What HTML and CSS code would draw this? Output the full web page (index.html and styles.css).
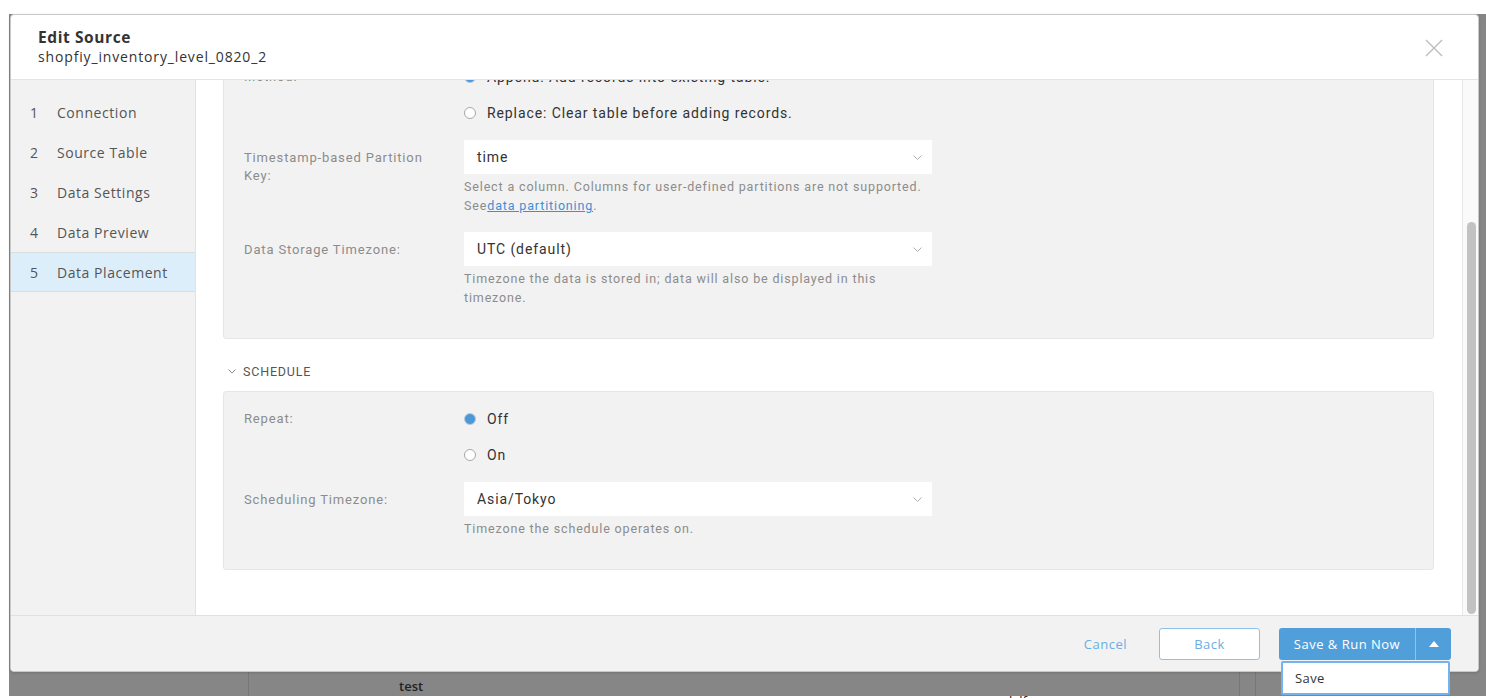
FILE: index.html
```html
<!DOCTYPE html>
<html>
<head>
<meta charset="utf-8">
<link rel="stylesheet" href="styles.css">
</head>
<body>
<div class="screen">
  <div class="backdrop">
    <div class="bg-row">
      <div class="bg-cell bg-first"></div>
      <div class="bg-cell bg-main">
        <span class="bg-text">test</span>
        <span class="bg-text bg-low">lxlf</span>
      </div>
      <div class="bg-cell bg-narrow"></div>
      <div class="bg-cell bg-rest"></div>
    </div>
  </div>

  <div class="modal">
    <div class="modal-header">
      <div class="titles">
        <div class="title">Edit Source</div>
        <div class="subtitle">shopfiy_inventory_level_0820_2</div>
      </div>
      <svg class="close" width="18" height="18" viewBox="0 0 18 18"><path d="M1 1L17 17M17 1L1 17" stroke="#bdbdbd" stroke-width="1.4" fill="none"/></svg>
    </div>

    <div class="modal-body">
      <nav class="steps">
        <div class="step"><span class="num">1</span><span>Connection</span></div>
        <div class="step"><span class="num">2</span><span>Source Table</span></div>
        <div class="step"><span class="num">3</span><span>Data Settings</span></div>
        <div class="step"><span class="num">4</span><span>Data Preview</span></div>
        <div class="step active"><span class="num">5</span><span>Data Placement</span></div>
      </nav>

      <div class="content">
        <div class="scroll">
          <div class="inner">
            <section class="panel">
              <div class="row">
                <div class="label radio-label">Method:</div>
                <div class="control radios">
                  <div class="radio-row"><span class="radio checked"></span><span>Append: Add records into existing table.</span></div>
                  <div class="radio-row"><span class="radio"></span><span>Replace: Clear table before adding records.</span></div>
                </div>
              </div>
              <div class="row">
                <div class="label">Timestamp-based Partition<br>Key:</div>
                <div class="control">
                  <div class="select"><span>time</span><svg width="9" height="5" viewBox="0 0 9 5"><path d="M0.5 0.5L4.5 4.5L8.5 0.5" stroke="#b0b0b0" stroke-width="1" fill="none"/></svg></div>
                  <div class="help">Select a column. Columns for user-defined partitions are not supported. See<a href="#">data partitioning</a>.</div>
                </div>
              </div>
              <div class="row">
                <div class="label">Data Storage Timezone:</div>
                <div class="control">
                  <div class="select"><span>UTC (default)</span><svg width="9" height="5" viewBox="0 0 9 5"><path d="M0.5 0.5L4.5 4.5L8.5 0.5" stroke="#b0b0b0" stroke-width="1" fill="none"/></svg></div>
                  <div class="help">Timezone the data is stored in; data will also be displayed in this timezone.</div>
                </div>
              </div>
            </section>

            <div class="section-head">
              <svg width="8" height="5" viewBox="0 0 8 5"><path d="M0.5 0.5L4 4L7.5 0.5" stroke="#888" stroke-width="1" fill="none"/></svg>
              <span>SCHEDULE</span>
            </div>

            <section class="panel">
              <div class="row">
                <div class="label radio-label">Repeat:</div>
                <div class="control radios">
                  <div class="radio-row"><span class="radio checked"></span><span>Off</span></div>
                  <div class="radio-row"><span class="radio"></span><span>On</span></div>
                </div>
              </div>
              <div class="row">
                <div class="label">Scheduling Timezone:</div>
                <div class="control">
                  <div class="select"><span>Asia/Tokyo</span><svg width="9" height="5" viewBox="0 0 9 5"><path d="M0.5 0.5L4.5 4.5L8.5 0.5" stroke="#b0b0b0" stroke-width="1" fill="none"/></svg></div>
                  <div class="help">Timezone the schedule operates on.</div>
                </div>
              </div>
            </section>
          </div>
        </div>
        <div class="scrollbar"><div class="thumb"></div></div>
      </div>
    </div>

    <div class="modal-footer">
      <button class="btn-link">Cancel</button>
      <button class="btn-outline">Back</button>
      <div class="split">
        <button class="split-main">Save &amp; Run Now</button>
        <button class="split-caret"><svg width="10" height="6" viewBox="0 0 10 6"><path d="M0 6L5 0L10 6Z" fill="#fff"/></svg></button>
        <div class="menu"><div class="menu-item">Save</div></div>
      </div>
    </div>
  </div>
</div>
</body>
</html>
```
FILE: styles.css
```css
* { box-sizing: border-box; }
html, body { margin: 0; padding: 0; }
body { background: #fff; font-family: "Open Sans", "Liberation Sans", sans-serif; }

.screen { position: relative; width: 1486px; height: 698px; overflow: hidden; background: #fff; }

.backdrop {
  position: absolute; left: 9px; top: 14px; right: 0; bottom: 2px;
  background: #868686;
  display: flex; flex-direction: column; justify-content: flex-end;
}
.bg-row { display: flex; height: 26px; }
.bg-cell { border-right: 1px solid #777; height: 100%; }
.bg-first { width: 240px; }
.bg-main { width: 991px; display: flex; padding-left: 150px; }
.bg-narrow { width: 16px; }
.bg-rest { flex: 1; border-right: none; }
.bg-text { font-family: "Open Sans", sans-serif; font-size: 13px; font-weight: 600; color: #222; line-height: 26px; padding-top: 3px; }
.bg-low { margin-left: 586px; padding-top: 18px; font-weight: 400; }

.modal {
  position: absolute; left: 10px; top: 14px; width: 1469px; height: 658px;
  background: #fff; border: 1px solid #c9c9c9; border-radius: 4px;
  display: flex; flex-direction: column; overflow: visible;
  box-shadow: 0 1px 3px rgba(0,0,0,0.15);
}

.modal-header {
  height: 65px; flex: none; display: flex; justify-content: space-between; align-items: flex-start;
  padding: 12px 35px 0 27px; border-bottom: 1px solid #e4e4e4; border-radius: 4px 4px 0 0;
}
.title { font-size: 15.5px; font-weight: 700; color: #333; line-height: 20px; letter-spacing: 0.6px; }
.subtitle { font-size: 14px; color: #333; line-height: 19px; letter-spacing: 0.85px; }
.close { margin-top: 12px; }

.modal-body { flex: 1; display: flex; min-height: 0; }

.steps { width: 185px; flex: none; background: #f2f2f2; border-right: 1px solid #e2e2e2; padding-top: 12px; }
.step { height: 40px; display: flex; align-items: center; padding-left: 19px; font-size: 14px; color: #555; letter-spacing: 0.55px; }
.step .num { width: 27px; }
.step.active { background: #dceefa; border-top: 1px solid #d9dde0; border-bottom: 1px solid #d9dde0; }

.content { flex: 1; display: flex; background: #fff; min-width: 0; }
.scroll { flex: 1; overflow: hidden; padding: 0 28px 0 27px; }
.inner { margin-top: -31px; }

.panel {
  background: #f2f2f2; border: 1px solid #e6e6e6; border-radius: 3px;
  padding: 17px 20px 31px 20px; display: flex; flex-direction: column; gap: 17px;
}
.row { display: flex; }
.label {
  width: 220px; flex: none; font-family: Roboto, "Liberation Sans", sans-serif;
  font-size: 13px; color: #8c8c8c; line-height: 18px; padding-top: 9px; letter-spacing: 0.85px;
}
.label.radio-label { padding-top: 1px; }
.control { width: 468px; font-family: Roboto, "Liberation Sans", sans-serif; font-size: 14px; color: #333; }
.radios { display: flex; flex-direction: column; gap: 16px; }
.radio-row { height: 20px; display: flex; align-items: center; gap: 11px; letter-spacing: 0.9px; }
.radio { width: 12px; height: 12px; border-radius: 50%; border: 1px solid #a8a8a8; background: #fff; flex: none; }
.radio.checked { background: #4b97d8; border-color: #b9cbdb; }

.select {
  height: 34px; background: #fff; display: flex; align-items: center; justify-content: space-between;
  padding: 0 10px 0 13px; letter-spacing: 0.9px;
}
.help { font-size: 12.5px; color: #8c8c8c; line-height: 19px; margin-top: 3px; letter-spacing: 0.85px; }
.help a { color: #3f8fd4; text-decoration: underline; }

.section-head {
  display: flex; align-items: center; gap: 7px; height: 20px; margin: 22px 0 10px 0; padding-left: 5px;
  font-family: Roboto, "Liberation Sans", sans-serif; font-size: 12.5px; color: #555; letter-spacing: 0.8px;
}

.scrollbar { width: 16px; flex: none; background: #fafafa; border-left: 1px solid #e8e8e8; padding: 142px 0 0 4px; }
.thumb { width: 9px; height: 392px; background: #c2c2c2; border-radius: 5px; }

.modal-footer {
  height: 56px; flex: none; background: #f2f2f2; border-top: 1px solid #e0e0e0; border-radius: 0 0 4px 4px;
  display: flex; align-items: center; justify-content: flex-end; padding-right: 27px;
}
button { font-family: "Open Sans", "Liberation Sans", sans-serif; font-size: 13px; cursor: pointer; letter-spacing: 0.5px; }
.btn-link { background: none; border: none; color: #6aaee3; padding: 0; margin-right: 32px; }
.btn-outline {
  width: 101px; height: 32px; background: #fff; border: 1px solid #8dc1ea; border-radius: 3px;
  color: #6aaee3; margin-right: 19px;
}
.split { position: relative; display: flex; height: 32px; }
.split-main {
  width: 137px; height: 32px; background: #509fdb; color: #fff; border: none; border-radius: 3px 0 0 3px;
  border-right: 1px solid #8ec4ec;
}
.split-caret {
  width: 35px; height: 32px; background: #509fdb; border: none; border-radius: 0 3px 3px 0;
  display: flex; align-items: center; justify-content: center; padding: 0;
}
.menu {
  position: absolute; left: 2px; right: 1px; top: 33px; height: 34px;
  background: #fff; border: 2px solid #72b3f0; border-radius: 2px;
}
.menu-item { font-size: 13px; color: #333; padding-left: 12px; line-height: 30px; letter-spacing: 0.4px; }
```
